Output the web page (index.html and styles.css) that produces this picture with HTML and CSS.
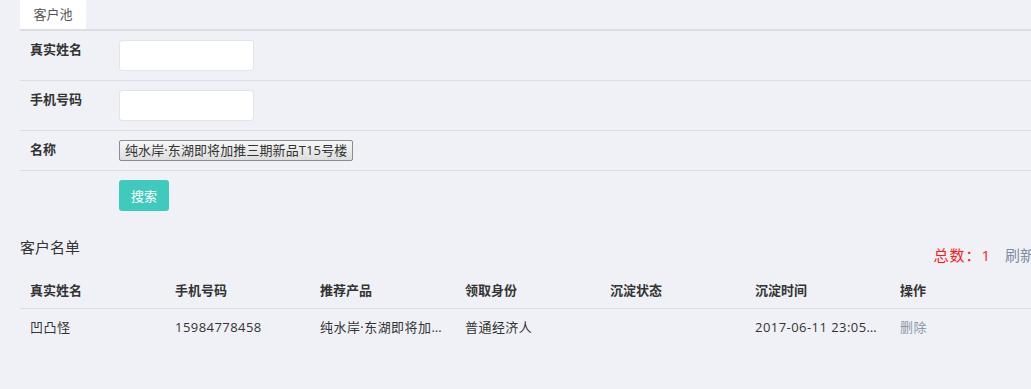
FILE: index.html
```html
<!DOCTYPE html>
<html lang="zh-CN">
<head>
  <meta charset="UTF-8">
  <title>客户池</title>
  <link rel="stylesheet" href="styles.css">
</head>
<body>
  <div class="page">
    <div class="tabs">
      <div class="tab active">客户池</div>
    </div>

    <div class="form">
      <div class="form-row">
        <label class="form-label">真实姓名</label>
        <input type="text" class="text-input">
      </div>
      <div class="form-row">
        <label class="form-label">手机号码</label>
        <input type="text" class="text-input">
      </div>
      <div class="form-row">
        <label class="form-label">名称</label>
        <button class="pick-btn">纯水岸·东湖即将加推三期新品T15号楼</button>
      </div>
      <div class="form-row last">
        <label class="form-label"></label>
        <button class="search-btn">搜索</button>
      </div>
    </div>

    <div class="list-head">
      <h3 class="list-title">客户名单</h3>
      <div class="list-tools">
        <span class="total">总数：1</span>
        <a class="refresh">刷新</a>
      </div>
    </div>

    <table class="list">
      <tr>
        <th>真实姓名</th>
        <th>手机号码</th>
        <th>推荐产品</th>
        <th>领取身份</th>
        <th>沉淀状态</th>
        <th>沉淀时间</th>
        <th>操作</th>
      </tr>
      <tr>
        <td>凹凸怪</td>
        <td>15984778458</td>
        <td>纯水岸·东湖即将加推三期新品T15号楼</td>
        <td>普通经济人</td>
        <td></td>
        <td>2017-06-11 23:05:12</td>
        <td><a class="del">删除</a></td>
      </tr>
    </table>
  </div>
</body>
</html>
```

FILE: styles.css
```css
html, body {
  overflow: hidden;
}

body {
  margin: 0;
  padding: 0;
  background: #f0f1f6;
  color: #333;
  font-family: "Open Sans", "Noto Sans CJK SC", sans-serif;
  font-size: 13px;
}

.page {
  margin-left: 20px;
  width: 1015px;
}

.tabs {
  display: flex;
  height: 29px;
  border-bottom: 2px solid #dcdde2;
}

.tab {
  width: 66px;
  line-height: 29px;
  text-align: center;
  color: #555;
}

.tab.active {
  background: #fff;
}

.form-row {
  display: flex;
  align-items: flex-start;
  padding: 9px 0;
  border-bottom: 1px solid #dcdde2;
}

.form-row.last {
  border-bottom: none;
}

.form-label {
  width: 89px;
  padding-left: 10px;
  line-height: 18px;
  font-weight: bold;
  color: #333;
}

.text-input {
  width: 135px;
  height: 31px;
  box-sizing: border-box;
  border: 1px solid #e3e4e8;
  border-radius: 3px;
  background: #fff;
}

.pick-btn {
  height: 21px;
  padding: 0 5px;
  border: 1px solid #8c8c8c;
  border-radius: 2px;
  background: linear-gradient(#f7f7f7, #dedede);
  color: #333;
  font-family: inherit;
  font-size: 13px;
  line-height: 19px;
  letter-spacing: 0.1px;
}

.search-btn {
  width: 50px;
  height: 31px;
  border: none;
  border-radius: 3px;
  background: #3fcabd;
  color: #fff;
  font-family: inherit;
  font-size: 13px;
}

.list-head {
  display: flex;
  justify-content: space-between;
  margin-top: 17px;
}

.list-title {
  margin: 0;
  font-size: 15px;
  font-weight: normal;
  line-height: 20px;
  color: #333;
}

.list-tools {
  display: flex;
  gap: 14px;
  padding-top: 8px;
  font-size: 15px;
  line-height: 20px;
}

.total {
  color: #ff1a1a;
  letter-spacing: 1px;
}

.refresh {
  color: #7f8da6;
}

.list {
  width: 100%;
  margin-top: 7px;
  border-collapse: collapse;
  table-layout: fixed;
}

.list th, .list td {
  padding: 9px 10px;
  line-height: 18px;
  text-align: left;
  white-space: nowrap;
  overflow: hidden;
  text-overflow: ellipsis;
}

.list td {
  letter-spacing: 0.45px;
}

.list th {
  font-weight: bold;
  border-bottom: 1px solid #dcdde2;
}

.del {
  color: #8c97a8;
}
```
